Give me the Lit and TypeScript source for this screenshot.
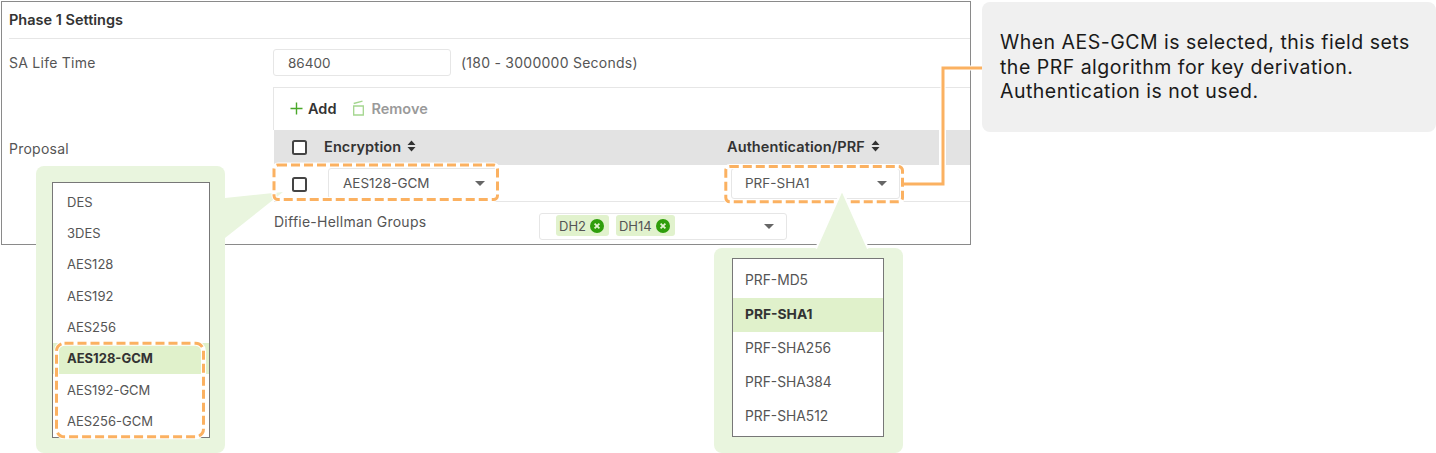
import { LitElement, html, css, svg } from 'lit';
import { customElement } from 'lit/decorators.js';

const LEFT_OPTIONS = ['DES', '3DES', 'AES128', 'AES192', 'AES256', 'AES128-GCM', 'AES192-GCM', 'AES256-GCM'];
const RIGHT_OPTIONS = ['PRF-MD5', 'PRF-SHA1', 'PRF-SHA256', 'PRF-SHA384', 'PRF-SHA512'];

// centre lines of the dashed highlight frames
const FRAMES = [
  { x: 274, y: 165, w: 223.5, h: 34.5, r: 4 },
  { x: 725.8, y: 166.5, w: 176.7, h: 35.3, r: 4 },
  { x: 56.5, y: 343.2, w: 147, h: 93.6, r: 8 },
];

const sortIcon = html`<svg class="sort" width="9" height="12" viewBox="0 0 9 12">
  <path d="M4.5 0.5 8.5 5H0.5ZM0.5 7H8.5L4.5 11.5Z" fill="#333"></path>
</svg>`;

const clearIcon = html`<svg width="14" height="14" viewBox="0 0 14 14">
  <circle cx="7" cy="7" r="7" fill="#2f9e0c"></circle>
  <path d="M4.6 4.6 9.4 9.4M9.4 4.6 4.6 9.4" stroke="#e2f2d0" stroke-width="1.8"></path>
</svg>`;

@customElement('app-root')
export class AppRoot extends LitElement {
  static styles = css`
    :host {
      display: block;
      position: relative;
      width: 1436px;
      height: 453px;
      overflow: hidden;
      background: #fff;
      font-family: Inter, 'Noto Sans', sans-serif;
      color: #555;
      font-size: 14px;
    }
    .page {
      display: flex;
      align-items: flex-start;
      gap: 11px;
      padding: 1px 0 0 1px;
    }
    .panel {
      box-sizing: border-box;
      flex: none;
      width: 970px;
      height: 244px;
      border: 1px solid #8a8a8a;
      padding-left: 7px;
      display: flex;
      flex-direction: column;
    }
    .title {
      height: 37px;
      flex: none;
      box-sizing: border-box;
      padding-bottom: 2px;
      display: flex;
      align-items: center;
      font-size: 14.5px;
      font-weight: 600;
      color: #333;
      border-bottom: 1px solid #e6e6e6;
    }
    .label {
      letter-spacing: 0.25px;
    }
    .row {
      display: grid;
      grid-template-columns: 264px 1fr;
      flex: none;
    }
    .life {
      height: 48px;
      align-items: center;
    }
    .life-label {
      margin-top: -2px;
    }
    .life-value {
      display: flex;
      align-items: center;
      gap: 10px;
      height: 100%;
      border-bottom: 1px solid #e6e6e6;
      box-sizing: content-box;
    }
    .field {
      box-sizing: border-box;
      background: #fff;
      border: 1px solid #e6e6e6;
      border-radius: 3px;
      height: 27px;
      display: flex;
      align-items: center;
      color: #555;
      font-size: 13.5px;
    }
    .input {
      width: 178px;
      padding-left: 14px;
    }
    .proposal {
      flex: 1;
      margin-top: 1px;
    }
    .proposal-label {
      padding-top: 52px;
    }
    .table {
      display: flex;
      flex-direction: column;
    }
    .toolbar {
      height: 42px;
      box-sizing: border-box;
      padding: 0 0 2px 16px;
      display: flex;
      align-items: center;
      font-size: 14.5px;
      font-weight: 600;
      border-left: 1px solid #e6e6e6;
    }
    .tool {
      display: flex;
      align-items: center;
      gap: 5px;
      color: #333;
    }
    .tool.off {
      color: #9a9a9a;
      gap: 7px;
      margin-left: 17px;
    }
    .head,
    .line {
      display: grid;
      grid-template-columns: 453px 1fr;
      align-items: center;
      margin-left: 1px;
    }
    .head {
      height: 35px;
      background: linear-gradient(to right, #e3e3e3 665px, #fff 665px, #fff 672px, #e3e3e3 672px);
      font-size: 14.5px;
      letter-spacing: 0.1px;
      font-weight: 600;
      color: #333;
    }
    .head-cell {
      display: flex;
      align-items: center;
      gap: 6px;
    }
    .head-cell.first {
      padding-left: 18px;
      gap: 17px;
    }
    .head-cell span.head-cell,
    .head-cell.auth {
      margin-top: -2px;
    }
    .sort {
      margin-top: -2px;
    }
    .box {
      box-sizing: border-box;
      width: 15px;
      height: 15px;
      border: 2px solid #444;
      border-radius: 2.5px;
      background: #fff;
      flex: none;
    }
    .line {
      height: 36px;
      border-bottom: 1px solid #e6e6e6;
    }
    .line-cell {
      display: flex;
      align-items: center;
    }
    .line-cell.first {
      padding-left: 18px;
      gap: 21px;
    }
    .line-cell.first .box {
      margin-top: 2px;
    }
    .select {
      justify-content: space-between;
      padding: 0 12px 0 14px;
      height: 31px;
    }
    .select.enc {
      width: 170px;
    }
    .select.auth {
      width: 169px;
      margin-left: 4px;
      padding-left: 13px;
    }
    .caret {
      width: 0;
      height: 0;
      border-left: 5px solid transparent;
      border-right: 5px solid transparent;
      border-top: 5px solid #666;
      flex: none;
    }
    .dh {
      display: grid;
      grid-template-columns: 265px 248px;
      align-items: center;
      flex: 1;
      padding: 7px 0 0 1px;
    }
    .dh-label {
      margin-bottom: 11px;
    }
    .select.groups {
      padding: 0 12px 0 16px;
      width: 248px;
      height: 27px;
    }
    .tags {
      display: flex;
      gap: 7px;
      margin-top: -2px;
    }
    .tag {
      display: flex;
      align-items: center;
      gap: 4px;
      height: 21px;
      padding: 0 5px 0 3px;
      background: #e1f2cd;
      border-radius: 3px;
      font-size: 13px;
    }

    .note {
      box-sizing: border-box;
      flex: none;
      width: 454px;
      height: 130px;
      margin-top: 1px;
      padding: 28px 18px;
      background: #f0f0f0;
      border-radius: 8px;
      font-size: 19.5px;
      letter-spacing: 0.49px;
      line-height: 24.7px;
      white-space: nowrap;
      color: #1a1a1a;
    }

    .overlay {
      position: absolute;
      inset: 0;
      pointer-events: none;
    }
    .popup {
      position: absolute;
      background: #e9f5de;
      border-radius: 8px;
      box-sizing: border-box;
      display: flex;
    }
    .popup.left {
      left: 36px;
      top: 166px;
      width: 189px;
      height: 287px;
      padding: 16px 15px 15px 16px;
    }
    .popup.right {
      left: 714px;
      top: 248px;
      width: 189px;
      height: 205px;
      padding: 10px 19px 16px 18px;
    }
    .list {
      flex: 1;
      box-sizing: border-box;
      background: #fff;
      border: 1px solid #777;
      display: flex;
      flex-direction: column;
      font-size: 13px;
      color: #555;
    }
    .left .list {
      padding-top: 3px;
    }
    .option {
      display: flex;
      align-items: center;
      height: 31.35px;
      padding-left: 14px;
      flex: none;
    }
    .right .list {
      padding-top: 5px;
      font-size: 13.8px;
    }
    .right .option {
      box-sizing: border-box;
      height: 34px;
      padding: 0 0 2px 12px;
    }
    .option.on {
      background: #e0f1cb;
      font-weight: 700;
      color: #333;
    }
    .shapes {
      position: absolute;
      left: 0;
      top: 0;
    }
  `;

  private _renderList(options: string[], selected: string) {
    return html`<div class="list">
      ${options.map((o) => html`<div class="option ${o === selected ? 'on' : ''}">${o}</div>`)}
    </div>`;
  }

  render() {
    return html`
      <div class="page">
        <div class="panel">
          <div class="title">Phase 1 Settings</div>
          <div class="row life">
            <div class="life-label label">SA Life Time</div>
            <div class="life-value">
              <div class="field input">86400</div>
              <span class="label">(180 - 3000000 Seconds)</span>
            </div>
          </div>
          <div class="row proposal">
            <div class="proposal-label label">Proposal</div>
            <div class="table">
              <div class="toolbar">
                <div class="tool">
                  <svg width="13" height="13" viewBox="0 0 13 13">
                    <path d="M6.5 0.5V12.5M0.5 6.5H12.5" stroke="#4aa82a" stroke-width="1.4"></path>
                  </svg>
                  Add
                </div>
                <div class="tool off">
                  <svg width="11" height="16" viewBox="0 0 11 16">
                    <path d="M0.7 6H10.3V15H0.7ZM0.7 3.5 9.5 1.2" fill="none" stroke="#a4d68e" stroke-width="1.3"></path>
                  </svg>
                  Remove
                </div>
              </div>
              <div class="head">
                <div class="head-cell first">
                  <span class="box"></span>
                  <span class="head-cell">Encryption ${sortIcon}</span>
                </div>
                <div class="head-cell auth">Authentication/PRF ${sortIcon}</div>
              </div>
              <div class="line">
                <div class="line-cell first">
                  <span class="box"></span>
                  <div class="field select enc">AES128-GCM <span class="caret"></span></div>
                </div>
                <div class="line-cell">
                  <div class="field select auth">PRF-SHA1 <span class="caret"></span></div>
                </div>
              </div>
              <div class="dh">
                <div class="dh-label label">Diffie-Hellman Groups</div>
                <div class="field select groups">
                  <div class="tags">
                    <div class="tag">DH2 ${clearIcon}</div>
                    <div class="tag">DH14 ${clearIcon}</div>
                  </div>
                  <span class="caret"></span>
                </div>
              </div>
            </div>
          </div>
        </div>
        <div class="note">
          When AES-GCM is selected, this field sets<br />
          the PRF algorithm for key derivation.<br />
          Authentication is not used.
        </div>
      </div>

      <div class="overlay">
        <svg class="shapes" width="1436" height="453">
          <path d="M225 198 283 192 225 238Z" fill="#e9f5de"></path>
        </svg>
        <div class="popup left">${this._renderList(LEFT_OPTIONS, 'AES128-GCM')}</div>
        <div class="popup right">${this._renderList(RIGHT_OPTIONS, 'PRF-SHA1')}</div>
        <svg class="shapes" width="1436" height="453">
          ${FRAMES.map(
            (f) => svg`
              <rect x=${f.x} y=${f.y} width=${f.w} height=${f.h} rx=${f.r} fill="none" stroke="#fff" stroke-width="5"></rect>
              <rect x=${f.x} y=${f.y} width=${f.w} height=${f.h} rx=${f.r} fill="none" stroke="#fbb161" stroke-width="3" stroke-dasharray="9 4"></rect>
            `,
          )}
          <path d="M904 184H943V68H982" fill="none" stroke="#fff" stroke-width="5"></path>
          <path d="M904 184H943V68H982" fill="none" stroke="#fbb161" stroke-width="3"></path>
          <path d="M816 248.5 842 190 868 248.5" fill="#e9f5de" stroke="#fff" stroke-width="2"></path>
        </svg>
      </div>
    `;
  }
}

declare global {
  interface HTMLElementTagNameMap {
    'app-root': AppRoot;
  }
}
